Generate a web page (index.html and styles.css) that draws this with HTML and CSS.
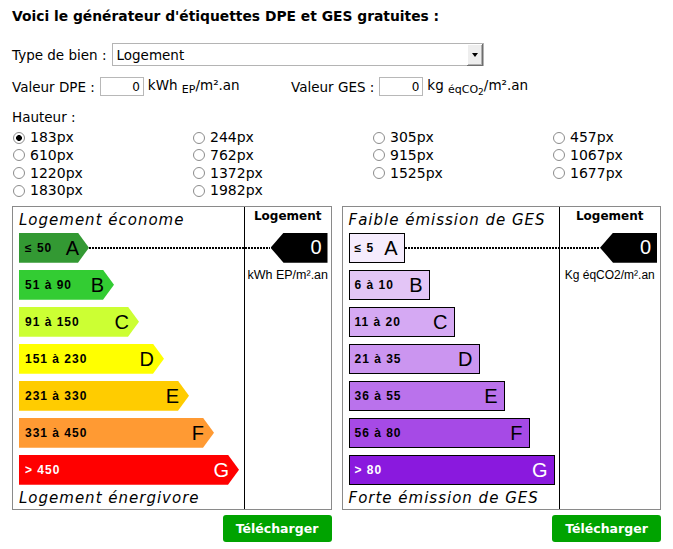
FILE: index.html
```html
<!DOCTYPE html>
<html lang="fr">
<head>
<meta charset="utf-8">
<title>Générateur d'étiquettes DPE et GES</title>
<link rel="stylesheet" href="styles.css">
</head>
<body>
<div class="page">
  <h1 class="title">Voici le générateur d'étiquettes DPE et GES gratuites :</h1>

  <div class="row row-type">
    <label class="lbl" for="type">Type de bien :</label>
    <div class="select-wrap">
      <select id="type" class="select"><option>Logement</option></select>
    </div>
  </div>

  <div class="row row-vals">
    <div class="val-group val-dpe">
      <label class="lbl" for="dpe">Valeur DPE :</label>
      <input id="dpe" class="num" type="text" value="0">
      <span class="unit">kWh <span class="sub">EP</span>/m².an</span>
    </div>
    <div class="val-group val-ges">
      <label class="lbl" for="ges">Valeur GES :</label>
      <input id="ges" class="num" type="text" value="0">
      <span class="unit">kg <span class="sub">éqCO<span class="sub2">2</span></span>/m².an</span>
    </div>
  </div>

  <div class="hauteur">Hauteur :</div>
  <div class="radios">
    <label class="radio"><input type="radio" name="h" checked>183px</label>
    <label class="radio"><input type="radio" name="h">244px</label>
    <label class="radio"><input type="radio" name="h">305px</label>
    <label class="radio"><input type="radio" name="h">457px</label>
    <label class="radio"><input type="radio" name="h">610px</label>
    <label class="radio"><input type="radio" name="h">762px</label>
    <label class="radio"><input type="radio" name="h">915px</label>
    <label class="radio"><input type="radio" name="h">1067px</label>
    <label class="radio"><input type="radio" name="h">1220px</label>
    <label class="radio"><input type="radio" name="h">1372px</label>
    <label class="radio"><input type="radio" name="h">1525px</label>
    <label class="radio"><input type="radio" name="h">1677px</label>
    <label class="radio"><input type="radio" name="h">1830px</label>
    <label class="radio"><input type="radio" name="h">1982px</label>
  </div>

  <div class="cards">
    <div class="card">
      <div class="panel panel-dpe">
        <div class="scale">
          <div class="scale-title">Logement économe</div>
          <div class="bars">
            <div class="bar dpe dpe-a"><span class="range">≤ 50</span><span class="letter">A</span></div>
            <div class="bar dpe dpe-b"><span class="range">51 à 90</span><span class="letter">B</span></div>
            <div class="bar dpe dpe-c"><span class="range">91 à 150</span><span class="letter">C</span></div>
            <div class="bar dpe dpe-d"><span class="range">151 à 230</span><span class="letter">D</span></div>
            <div class="bar dpe dpe-e"><span class="range">231 à 330</span><span class="letter">E</span></div>
            <div class="bar dpe dpe-f"><span class="range">331 à 450</span><span class="letter">F</span></div>
            <div class="bar dpe dpe-g"><span class="range">&gt; 450</span><span class="letter">G</span></div>
          </div>
          <div class="scale-title scale-bottom">Logement énergivore</div>
        </div>
        <div class="side">
          <div class="side-head">Logement</div>
          <div class="indicator"><span>0</span></div>
          <div class="side-unit">kWh EP/m².an</div>
        </div>
        <div class="dots"></div>
      </div>
      <div class="btn-row"><button class="btn" type="button">Télécharger</button></div>
    </div>

    <div class="card">
      <div class="panel panel-ges">
        <div class="scale">
          <div class="scale-title">Faible émission de GES</div>
          <div class="bars">
            <div class="bar ges ges-a"><span class="range">≤ 5</span><span class="letter">A</span></div>
            <div class="bar ges ges-b"><span class="range">6 à 10</span><span class="letter">B</span></div>
            <div class="bar ges ges-c"><span class="range">11 à 20</span><span class="letter">C</span></div>
            <div class="bar ges ges-d"><span class="range">21 à 35</span><span class="letter">D</span></div>
            <div class="bar ges ges-e"><span class="range">36 à 55</span><span class="letter">E</span></div>
            <div class="bar ges ges-f"><span class="range">56 à 80</span><span class="letter">F</span></div>
            <div class="bar ges ges-g"><span class="range">&gt; 80</span><span class="letter">G</span></div>
          </div>
          <div class="scale-title scale-bottom">Forte émission de GES</div>
        </div>
        <div class="side">
          <div class="side-head">Logement</div>
          <div class="indicator"><span>0</span></div>
          <div class="side-unit side-unit-ges">Kg éqCO2/m².an</div>
        </div>
        <div class="dots"></div>
      </div>
      <div class="btn-row"><button class="btn" type="button">Télécharger</button></div>
    </div>
  </div>
</div>
</body>
</html>
```

FILE: styles.css
```css
* { box-sizing: border-box; }

body {
  margin: 0;
  background: #fff;
  color: #000;
  font-family: "DejaVu Sans", Verdana, sans-serif;
  font-size: 13.5px;
}

.page {
  padding: 8px 12px 0 12px;
}

.title {
  margin: 0;
  font-size: 13.85px;
  line-height: 16px;
  font-weight: bold;
}

.row {
  display: flex;
  align-items: center;
  gap: 5px;
}

.row-type {
  margin-top: 19px;
  height: 23px;
}

.select-wrap {
  position: relative;
  width: 372px;
  height: 23px;
}

.select {
  appearance: none;
  -webkit-appearance: none;
  width: 100%;
  height: 100%;
  margin: 0;
  border: 1px solid #b4b4b4;
  border-radius: 0;
  background: #fff;
  padding: 0 0 0 4px;
  font-family: "DejaVu Sans", Verdana, sans-serif;
  font-size: 13.5px;
  color: #000;
}

.select-wrap::after {
  content: "";
  position: absolute;
  right: 1px;
  top: 1px;
  width: 15px;
  height: 21px;
  background: #eeeeee;
  border-right: 1px solid #6e6e6e;
  border-bottom: 1px solid #6e6e6e;
  box-shadow: inset 1px 1px 0 #fff, inset -1px -1px 0 #b0b0b0;
}

.select-wrap::before {
  content: "";
  position: absolute;
  right: 6px;
  top: 10px;
  width: 0;
  height: 0;
  border-left: 3px solid transparent;
  border-right: 3px solid transparent;
  border-top: 4px solid #000;
  z-index: 1;
}

.row-vals {
  margin-top: 11px;
  height: 19px;
  gap: 0;
}

.val-group {
  display: flex;
  align-items: center;
  gap: 4px;
}

.val-group .num { margin-left: 1px; }

.val-dpe { width: 279px; }

.num {
  width: 44px;
  height: 19px;
  margin: 0;
  border: 1px solid #b8b8b8;
  padding: 0 3px 0 0;
  text-align: right;
  font-family: "DejaVu Sans", Verdana, sans-serif;
  font-size: 12px;
  color: #000;
  background: #fff;
}

.unit { white-space: nowrap; }

.sub {
  font-size: 11px;
  vertical-align: -3px;
}

.sub2 {
  font-size: 9px;
  vertical-align: -2px;
}

.hauteur {
  margin-top: 12px;
  line-height: 18px;
}

.radios {
  margin-top: 3px;
  display: grid;
  grid-template-columns: 180px 180px 180px 1fr;
  grid-auto-rows: 17.67px;
}

.radio {
  display: flex;
  align-items: center;
  font-size: 14px;
  line-height: 17px;
}

.radio input {
  appearance: none;
  -webkit-appearance: none;
  width: 12px;
  height: 12px;
  margin: 0 5px 0 1px;
  border: 1px solid #8c8c8c;
  border-radius: 50%;
  background: #fff;
}

.radio input:checked {
  background: radial-gradient(circle, #000 0 2.6px, #fff 3.2px);
}

.cards {
  margin-top: 6px;
  display: flex;
  gap: 10px;
}

.card { width: 320px; }

.panel {
  position: relative;
  display: flex;
  height: 304px;
  border: 1px solid #8a8a8a;
}

.scale {
  border-right: 1px solid #000;
  padding: 3px 0 0 6px;
}

.panel-dpe .scale { width: 232px; }
.panel-ges .scale { width: 217px; }

.scale-title {
  font-style: italic;
  font-size: 15px;
  line-height: 20px;
  letter-spacing: 1px;
  white-space: nowrap;
}

.scale-bottom { margin-top: 3px; }

.bars {
  margin-top: 3px;
  display: flex;
  flex-direction: column;
  gap: 7px;
}

.bar {
  height: 30px;
  display: flex;
  align-items: center;
  justify-content: space-between;
  font-family: "Liberation Sans", Arial, sans-serif;
}

.range {
  font-size: 12px;
  font-weight: bold;
  letter-spacing: 1px;
}

.letter {
  font-size: 20px;
  line-height: 1;
}

.bar.dpe {
  padding: 0 10px 0 6px;
  clip-path: polygon(0 0, calc(100% - 11px) 0, 100% 50%, calc(100% - 11px) 100%, 0 100%);
}

.dpe-a { width: 70px; background: #339933; }
.dpe-b { width: 95px; background: #33cc33; }
.dpe-c { width: 120px; background: #ccff33; }
.dpe-d { width: 145px; background: #ffff00; }
.dpe-e { width: 170px; background: #ffcc00; }
.dpe-f { width: 195px; background: #ff9a33; }
.dpe-g { width: 220px; background: #ff0000; color: #fff; }

.bar.ges {
  border: 1px solid #000;
  padding: 0 6px 0 5px;
}

.ges-a { width: 56px; background: #f5ecfd; }
.ges-b { width: 81px; background: #e3c5f6; }
.ges-c { width: 106px; background: #d5a9f3; }
.ges-d { width: 131px; background: #cb95f0; }
.ges-e { width: 156px; background: #ba72ec; }
.ges-f { width: 181px; background: #a64ae6; }
.ges-g { width: 206px; background: #8a19de; color: #fff; }

.side {
  flex: 1;
  display: flex;
  flex-direction: column;
  align-items: center;
  padding-top: 1px;
}

.side-head {
  font-weight: bold;
  font-size: 12px;
  line-height: 16px;
}

.indicator {
  align-self: flex-end;
  margin: 9px 3px 0 0;
  width: 57px;
  height: 30px;
  background: #000;
  color: #fff;
  display: flex;
  align-items: center;
  justify-content: flex-end;
  padding-right: 6px;
  clip-path: polygon(13px 0, 100% 0, 100% 100%, 13px 100%, 0 50%);
  font-family: "Liberation Sans", Arial, sans-serif;
  font-size: 20px;
}

.side-unit {
  margin-top: 5px;
  font-family: "Liberation Sans", Arial, sans-serif;
  font-size: 12.5px;
  line-height: 14px;
  white-space: nowrap;
}

.side-unit-ges { font-size: 12px; }

.dots {
  position: absolute;
  top: 40px;
  height: 2px;
  background: repeating-linear-gradient(to right, #000 0 2px, transparent 2px 3px);
}

.panel-dpe .dots { left: 76px; width: 181px; }
.panel-ges .dots { left: 62px; width: 195px; }

.btn-row {
  display: flex;
  justify-content: flex-end;
  margin-top: 5px;
}

.btn {
  width: 109px;
  height: 27px;
  border: 0;
  border-radius: 3px;
  background: #00a300;
  color: #fff;
  font-family: "DejaVu Sans", Verdana, sans-serif;
  font-weight: bold;
  font-size: 12.5px;
  padding: 0;
}
```
